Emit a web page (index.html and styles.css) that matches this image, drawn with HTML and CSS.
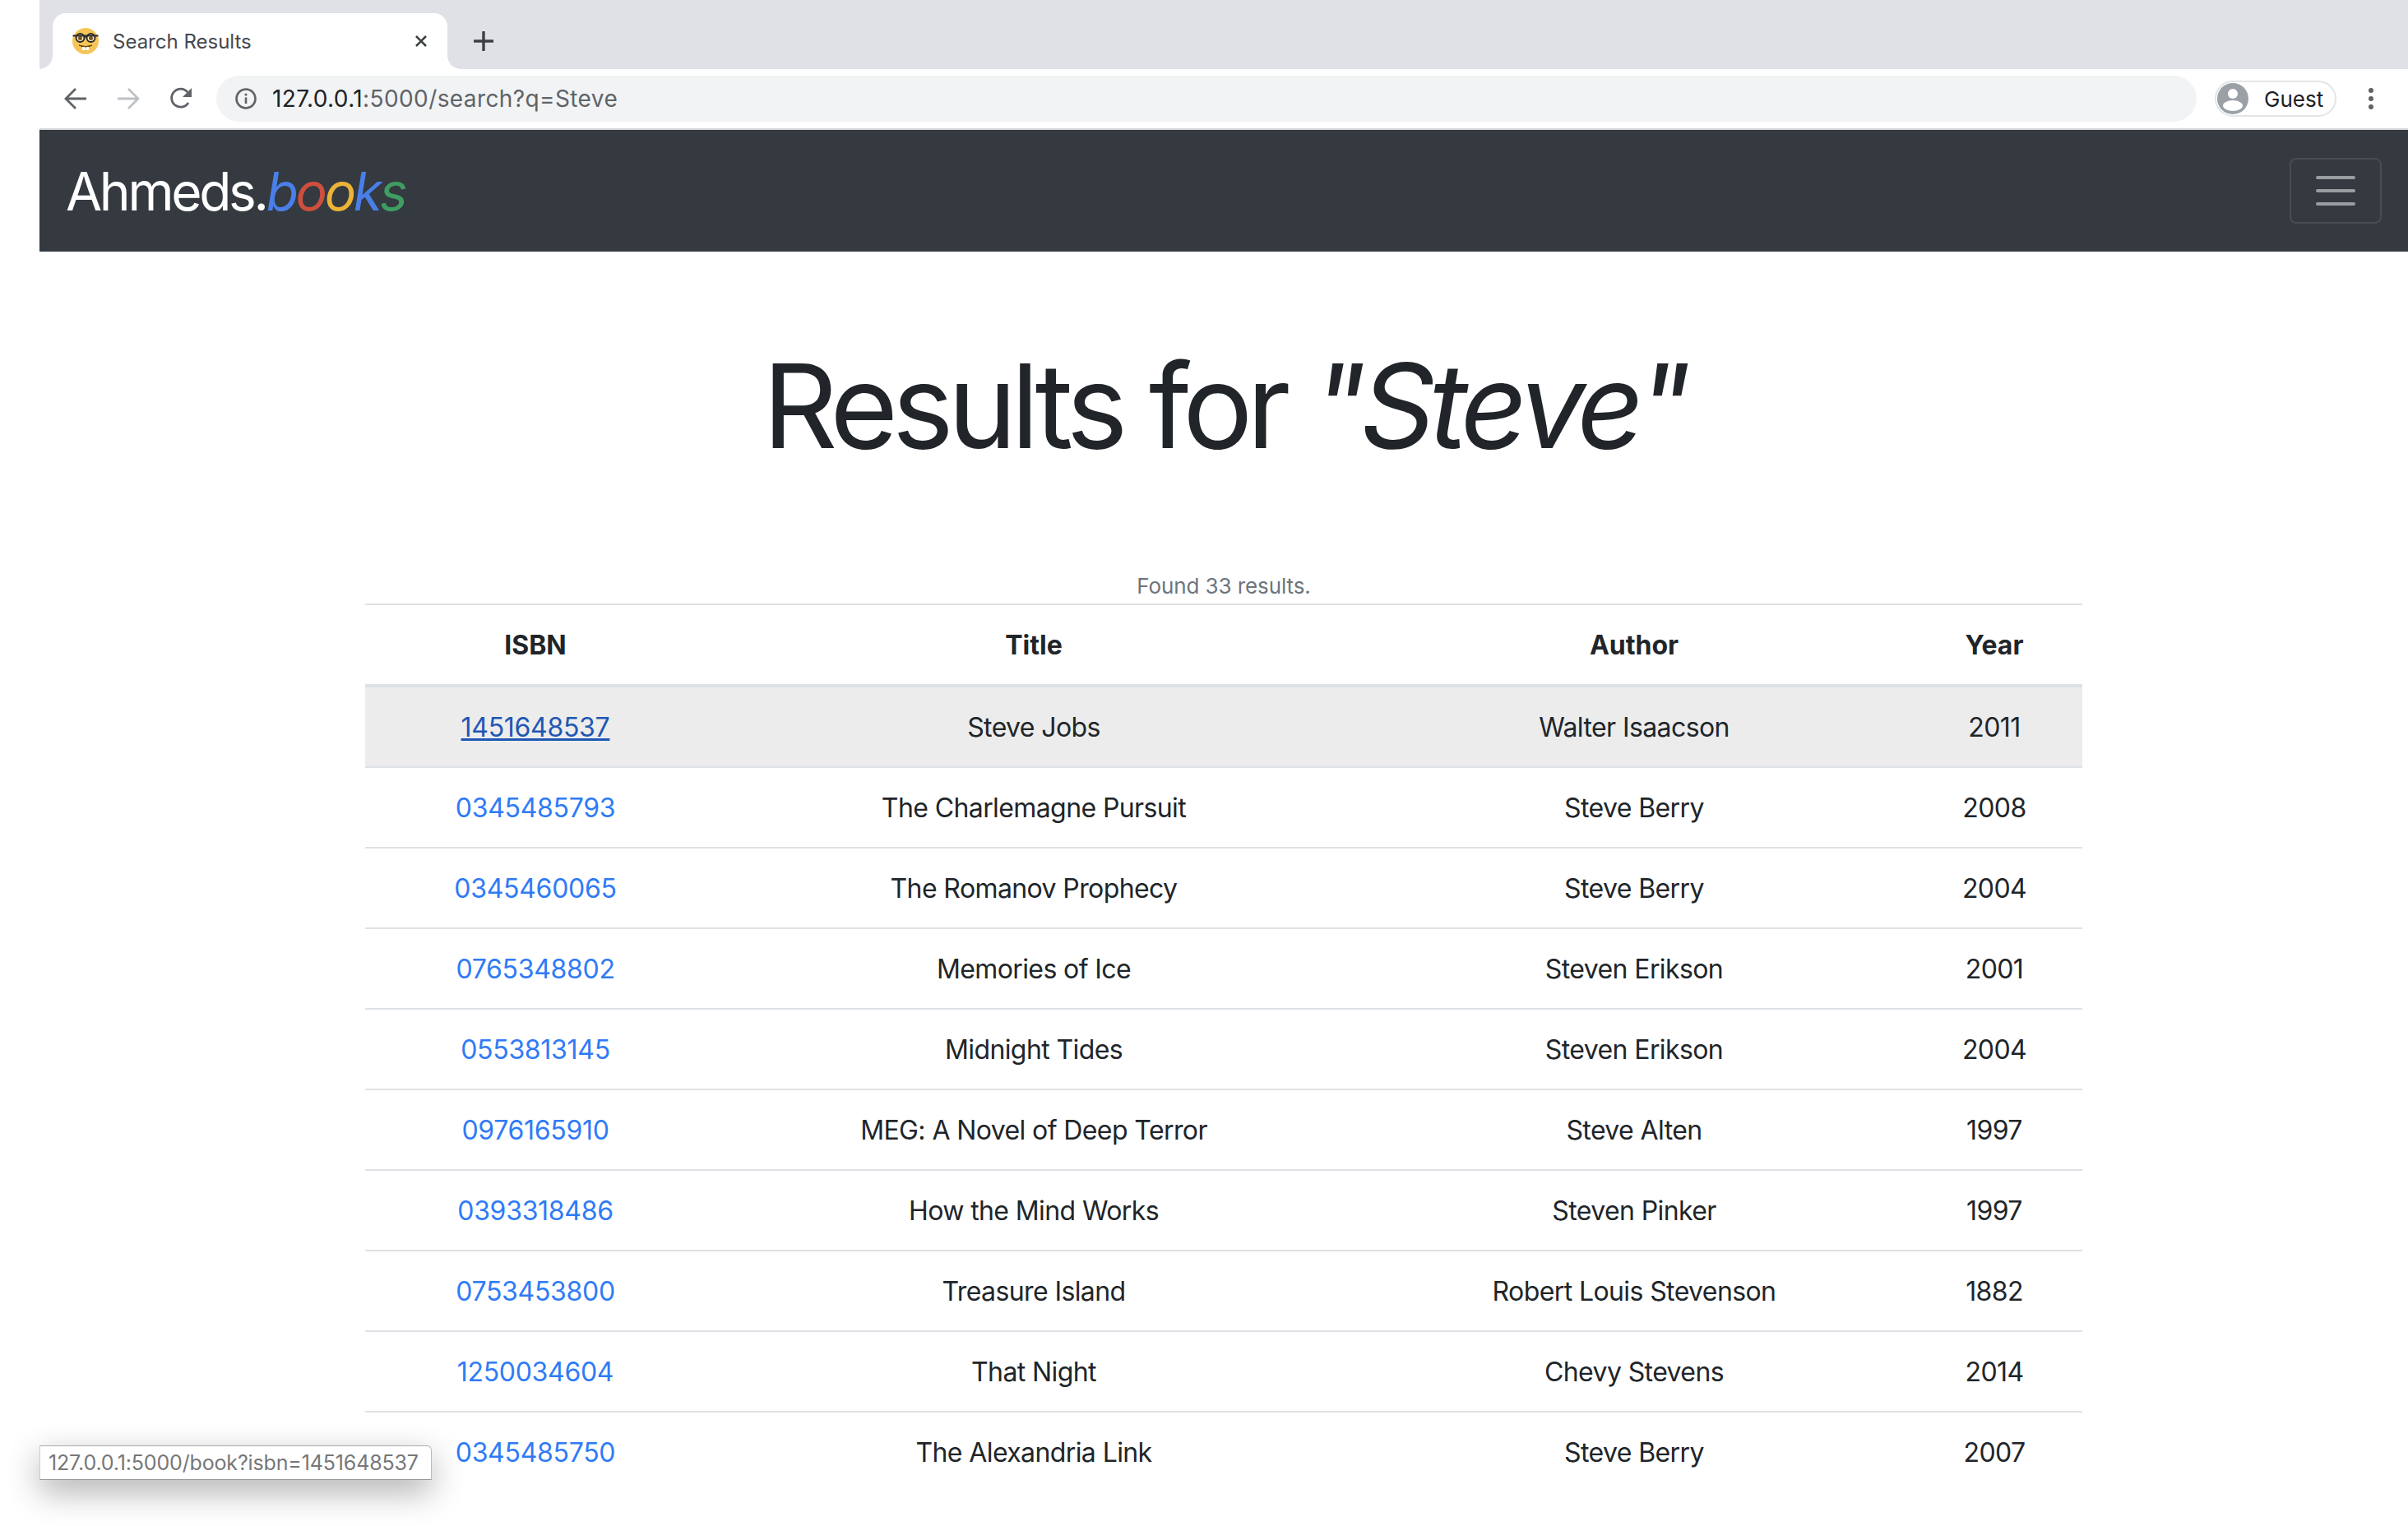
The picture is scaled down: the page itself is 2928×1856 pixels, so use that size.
FILE: index.html
```html
<!DOCTYPE html>
<html>
<head>
  <title>Search Results</title>
  <meta charset="UTF-8" />
  <link rel="stylesheet" href="styles.css">
</head>
<body>
  <div class="window">
    <!-- Tab strip -->
    <div class="tabstrip">
      <div class="tab">
        <svg class="favicon" viewBox="0 0 32 32">
          <circle cx="16" cy="16" r="16" fill="#f6c558"/>
          <circle cx="9.5" cy="12" r="5" fill="#fff0c8" stroke="#2b2b2b" stroke-width="2"/>
          <circle cx="22.5" cy="12" r="5" fill="#fff0c8" stroke="#2b2b2b" stroke-width="2"/>
          <circle cx="9.5" cy="12.5" r="2.5" fill="#7a5520"/>
          <circle cx="22.5" cy="12.5" r="2.5" fill="#7a5520"/>
          <path d="M0.5 9.5 H31.5 M14 10.5 H18" stroke="#2b2b2b" stroke-width="2" fill="none"/>
          <path d="M8 21 Q16 26 24 21 Q16 24 8 21Z" fill="#664500" stroke="#664500"/>
          <path d="M12 23 h3.5 v4 h-3.5z M16.5 23 h3.5 v4 h-3.5z" fill="#fff"/>
        </svg>
        <span class="tab-title">Search Results</span>
        <svg class="tab-close" viewBox="0 0 16 16"><path d="M2 2 L14 14 M14 2 L2 14" stroke="#3c4043" stroke-width="2.6" fill="none"/></svg>
      </div>
      <svg class="new-tab" viewBox="0 0 24 24"><path d="M12 1 V23 M1 12 H23" stroke="#3c4043" stroke-width="3.4" stroke-linecap="round" fill="none"/></svg>
    </div>

    <!-- Toolbar -->
    <div class="toolbar">
      <svg class="nav-icon" viewBox="0 0 28 28"><path d="M27 14 H3 M14 2 L2 14 L14 26" stroke="#5f6368" stroke-width="2.8" fill="none"/></svg>
      <svg class="nav-icon" viewBox="0 0 28 28"><path d="M1 14 H25 M14 2 L26 14 L14 26" stroke="#bdc1c6" stroke-width="2.8" fill="none"/></svg>
      <svg class="nav-icon" viewBox="0 0 28 28"><path d="M23 19 A11 11 0 1 1 22 6" stroke="#5f6368" stroke-width="2.8" fill="none"/><path d="M27 1 V12 H16Z" fill="#5f6368"/></svg>
      <div class="omnibox">
        <svg class="info-icon" viewBox="0 0 26 26">
          <circle cx="13" cy="13" r="11.5" stroke="#5f6368" stroke-width="2.6" fill="none"/>
          <path d="M13 11.5 V19" stroke="#5f6368" stroke-width="2.6" fill="none"/>
          <circle cx="13" cy="8" r="1.6" fill="#5f6368"/>
        </svg>
        <span class="url"><span class="url-host">127.0.0.1</span>:5000/search?q=Steve</span>
      </div>
      <div class="guest">
        <svg class="avatar" viewBox="0 0 38 38">
          <circle cx="19" cy="19" r="19" fill="#9aa0a6"/>
          <circle cx="19" cy="13" r="6" fill="#fff"/>
          <ellipse cx="19" cy="27.5" rx="12" ry="6.5" fill="#fff"/>
        </svg>
        <span>Guest</span>
      </div>
      <svg class="menu-dots" viewBox="0 0 8 28"><circle cx="4" cy="4" r="3" fill="#5f6368"/><circle cx="4" cy="14" r="3" fill="#5f6368"/><circle cx="4" cy="24" r="3" fill="#5f6368"/></svg>
    </div>

    <!-- Navbar -->
    <nav class="navbar">
      <a class="brand">Ahmeds.<em class="books"><span class="c-blue">b</span><span class="c-red">o</span><span class="c-yellow">o</span><span class="c-blue">k</span><span class="c-green">s</span></em></a>
      <button class="toggler"><span class="bar"></span><span class="bar"></span><span class="bar"></span></button>
    </nav>

    <main class="content">
      <h1 class="heading">Results for <em>"Steve"</em></h1>
      <table class="results">
        <caption>Found 33 results.</caption>
        <colgroup>
          <col class="col-isbn"><col class="col-title"><col class="col-author"><col class="col-year">
        </colgroup>
        <thead>
          <tr><th>ISBN</th><th>Title</th><th>Author</th><th>Year</th></tr>
        </thead>
        <tbody>
          <tr class="hovered"><td><a class="hover-link">1451648537</a></td><td>Steve Jobs</td><td>Walter Isaacson</td><td>2011</td></tr>
          <tr><td><a>0345485793</a></td><td>The Charlemagne Pursuit</td><td>Steve Berry</td><td>2008</td></tr>
          <tr><td><a>0345460065</a></td><td>The Romanov Prophecy</td><td>Steve Berry</td><td>2004</td></tr>
          <tr><td><a>0765348802</a></td><td>Memories of Ice</td><td>Steven Erikson</td><td>2001</td></tr>
          <tr><td><a>0553813145</a></td><td>Midnight Tides</td><td>Steven Erikson</td><td>2004</td></tr>
          <tr><td><a>0976165910</a></td><td>MEG: A Novel of Deep Terror</td><td>Steve Alten</td><td>1997</td></tr>
          <tr><td><a>0393318486</a></td><td>How the Mind Works</td><td>Steven Pinker</td><td>1997</td></tr>
          <tr><td><a>0753453800</a></td><td>Treasure Island</td><td>Robert Louis Stevenson</td><td>1882</td></tr>
          <tr><td><a>1250034604</a></td><td>That Night</td><td>Chevy Stevens</td><td>2014</td></tr>
          <tr><td><a>0345485750</a></td><td>The Alexandria Link</td><td>Steve Berry</td><td>2007</td></tr>
        </tbody>
      </table>
    </main>
  </div>

  <!-- Link preview bubble -->
  <div class="status-bubble">127.0.0.1:5000/book?isbn=1451648537</div>
</body>
</html>
```

FILE: styles.css
```css
html, body {
  height: 100%;
  margin: 0;
  overflow: hidden;
  background: #fff;
}

body {
  font-family: Inter, "Liberation Sans", sans-serif;
  color: #212529;
  padding-left: 48px;
  box-sizing: border-box;
}

.window {
  display: flex;
  flex-direction: column;
  height: 100%;
}

/* Tab strip */
.tabstrip {
  height: 84px;
  flex: none;
  background: #dfe1e6;
  display: flex;
  align-items: flex-end;
  padding-left: 16px;
  box-sizing: border-box;
}

.tab {
  width: 480px;
  height: 68px;
  background: #fff;
  border-radius: 16px 16px 0 0;
  display: flex;
  align-items: center;
  padding: 0 24px;
  box-sizing: border-box;
  position: relative;
}

.tab::before, .tab::after {
  content: "";
  position: absolute;
  bottom: 0;
  width: 16px;
  height: 16px;
  background: radial-gradient(circle at 0 0, #dfe1e6 15.5px, #fff 16px);
}

.tab::before {
  left: -16px;
}

.tab::after {
  right: -16px;
  background: radial-gradient(circle at 100% 0, #dfe1e6 15.5px, #fff 16px);
}

.favicon {
  width: 32px;
  height: 32px;
  flex: none;
}

.tab-title {
  margin-left: 17px;
  font-size: 24px;
  color: #45484d;
  flex: 1;
}

.tab-close {
  width: 16px;
  height: 16px;
  flex: none;
}

.new-tab {
  width: 24px;
  height: 24px;
  margin: 0 0 22px 32px;
}

/* Toolbar */
.toolbar {
  height: 74px;
  flex: none;
  display: flex;
  align-items: center;
  box-sizing: border-box;
  padding-left: 30px;
  background: #fff;
  border-bottom: 2px solid #d7d8db;
}

.nav-icon {
  width: 28px;
  height: 28px;
  margin-right: 36px;
  flex: none;
}

.omnibox {
  width: 2408px;
  height: 56px;
  margin-left: -7px;
  border-radius: 28px;
  background: #f1f3f4;
  display: flex;
  align-items: center;
  padding-left: 23px;
  box-sizing: border-box;
  flex: none;
}

.info-icon {
  width: 26px;
  height: 26px;
  flex: none;
}

.url {
  margin-left: 19px;
  font-size: 28px;
  letter-spacing: 0.4px;
  color: #5f6368;
}

.url-host {
  color: #202124;
}

.guest {
  margin-left: 22px;
  width: 148px;
  height: 44px;
  border: 2px solid #e3e4e6;
  border-radius: 22px;
  box-sizing: border-box;
  display: flex;
  align-items: center;
  gap: 19px;
  padding-left: 1px;
  font-size: 26px;
  color: #202124;
  flex: none;
}

.avatar {
  width: 38px;
  height: 38px;
  flex: none;
}

.menu-dots {
  width: 8px;
  height: 28px;
  margin-left: 38px;
  flex: none;
}

/* Navbar */
.navbar {
  height: 148px;
  flex: none;
  background: #343a40;
  display: flex;
  align-items: center;
  justify-content: space-between;
  padding: 0 32px;
  box-sizing: border-box;
}

.brand {
  font-size: 64px;
  line-height: 80px;
  padding-top: 2px;
  color: #fff;
  letter-spacing: -3.3px;
}

.books {
  font-style: italic;
}

.c-blue { color: #4a7fe8; }
.c-red { color: #cf4f3f; }
.c-yellow { color: #ecb337; }
.c-green { color: #3f9d62; }

.toggler {
  width: 112px;
  height: 80px;
  padding: 0;
  background: transparent;
  border: 2px solid #484d53;
  border-radius: 8px;
  display: flex;
  flex-direction: column;
  align-items: center;
  justify-content: center;
  gap: 12px;
}

.bar {
  width: 48px;
  height: 4px;
  border-radius: 2px;
  background: #9a9da0;
}

/* Results */
.content {
  flex: 1;
  min-height: 0;
}

.heading {
  margin: 0;
  padding-top: 101px;
  height: 392px;
  box-sizing: border-box;
  text-align: center;
  font-size: 142px;
  font-weight: 375;
  line-height: 172px;
  letter-spacing: -7.2px;
}

.results {
  width: 2088px;
  margin: 0 auto;
  border-collapse: collapse;
  table-layout: fixed;
  font-size: 32px;
  letter-spacing: -0.6px;
  text-align: center;
}

.results caption {
  caption-side: top;
  font-size: 26px;
  letter-spacing: -0.1px;
  color: #6c757d;
  height: 36px;
  line-height: 30px;
}

.col-isbn { width: 414px; }
.col-title { width: 798px; }
.col-author { width: 662px; }
.col-year { width: 214px; }

.results th, .results td {
  height: 96px;
  padding: 0;
  vertical-align: middle;
  border-top: 2px solid #dee2e6;
}

.results thead th {
  border-bottom: 4px solid #dee2e6;
  font-weight: 700;
  letter-spacing: 0;
}

.results a {
  color: #2f7bf6;
  letter-spacing: -0.3px;
}

.hovered {
  background: #ececed;
}

.results a.hover-link {
  color: #1f57b3;
  text-decoration: underline;
}

/* Link preview bubble */
.status-bubble {
  position: absolute;
  left: 48px;
  top: 1758px;
  width: 477px;
  height: 42px;
  box-sizing: border-box;
  padding-left: 10px;
  line-height: 40px;
  font-size: 25px;
  letter-spacing: -0.15px;
  color: #777;
  background: #fff;
  border-top: 1px solid #aaa;
  border-right: 1px solid #bbb;
  border-bottom: 1px solid #999;
  border-left: 1px solid #ccc;
  border-radius: 0 6px 0 0;
  box-shadow: 0 14px 40px rgba(0, 0, 0, 0.32);
  white-space: nowrap;
}
```
